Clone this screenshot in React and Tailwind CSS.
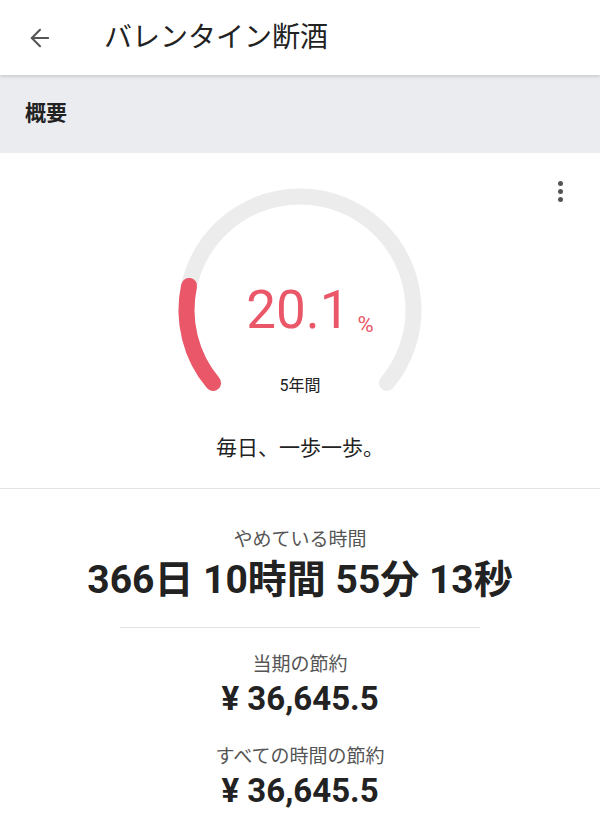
import { ArrowLeft } from 'lucide-react'

const FONT = { fontFamily: 'Roboto, "Noto Sans CJK JP", sans-serif' }

function Gauge({ percent }) {
    // 260° arc, open at the bottom
    const r = 113.5
    const c = 130
    const start = 140
    const total = 260
    const sweep = (total * percent) / 100
    const pt = (deg) => {
        const a = (deg * Math.PI) / 180
        return [c + r * Math.cos(a), c + r * Math.sin(a)]
    }
    const [sx, sy] = pt(start)
    const [ex, ey] = pt(start + total)
    const [px, py] = pt(start + sweep)

    return (
        <div className="relative mx-auto w-[260px] h-[215px]">
            <svg width="260" height="215" viewBox="0 0 260 215" className="block">
                <path
                    d={`M ${sx} ${sy} A ${r} ${r} 0 1 1 ${ex} ${ey}`}
                    fill="none"
                    stroke="#ececec"
                    strokeWidth="16"
                    strokeLinecap="round"
                />
                <path
                    d={`M ${sx} ${sy} A ${r} ${r} 0 0 1 ${px} ${py}`}
                    fill="none"
                    stroke="#ea5769"
                    strokeWidth="16"
                    strokeLinecap="round"
                />
            </svg>
            <div className="absolute inset-x-0 top-[100px] flex items-end justify-center text-[#ea5769]">
                <span className="text-[53px] leading-[60px] font-normal ml-[20px]">20.1</span>
                <span className="text-[22px] leading-[30px] ml-[8px]">%</span>
            </div>
            <div className="absolute inset-x-0 top-[196px] text-center text-[16px] leading-[20px] text-[#222]">
                5年間
            </div>
        </div>
    )
}

export default function App() {
    return (
        <div className="w-[600px] min-h-[835px] bg-white text-[#222]" style={FONT}>
            {/* Toolbar */}
            <header className="relative z-10 h-[75px] flex items-center bg-white shadow-[0_2px_3px_rgba(0,0,0,0.12)]">
                <ArrowLeft className="ml-[26px] w-[28px] h-[28px] text-[#555]" strokeWidth={1.8} />
                <h1 className="ml-[50px] text-[28px] font-normal">バレンタイン断酒</h1>
            </header>

            {/* Section title */}
            <div className="h-[78px] flex items-center bg-[#ebecf0] px-[25px]">
                <h2 className="text-[21px] font-bold">概要</h2>
            </div>

            {/* Gauge card */}
            <section className="relative pt-[27px] pb-[26px] border-b border-[#e3e3e3]">
                <button className="absolute right-[33px] top-[24px] flex flex-col gap-[3px] p-1">
                    <span className="w-[5px] h-[5px] rounded-full bg-[#555]" />
                    <span className="w-[5px] h-[5px] rounded-full bg-[#555]" />
                    <span className="w-[5px] h-[5px] rounded-full bg-[#555]" />
                </button>
                <Gauge percent={20.1} />
                <p className="mt-[39px] text-center text-[21px] leading-[28px]">毎日、一歩一歩。</p>
            </section>

            {/* Stats */}
            <section className="flex flex-col items-center pt-[38px]">
                <div className="text-[19px] leading-[26px] text-[#555]">やめている時間</div>
                <div className="mt-[2px] text-[39px] leading-[50px] font-bold">366日 10時間 55分 13秒</div>
                <div className="mt-[22px] w-[360px] h-px bg-[#e3e3e3]" />
                <div className="mt-[24px] text-[19px] leading-[26px] text-[#555]">当期の節約</div>
                <div className="text-[33px] leading-[42px] font-bold">¥ 36,645.5</div>
                <div className="mt-[24px] text-[19px] leading-[26px] text-[#555]">すべての時間の節約</div>
                <div className="text-[33px] leading-[42px] font-bold">¥ 36,645.5</div>
            </section>
        </div>
    )
}
